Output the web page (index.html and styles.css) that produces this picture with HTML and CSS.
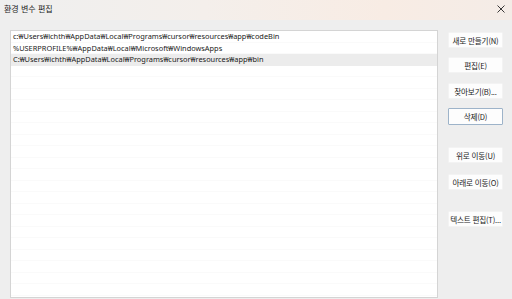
FILE: index.html
```html
<!DOCTYPE html>
<html lang="ko">
<head>
<meta charset="utf-8">
<link rel="stylesheet" href="styles.css">
</head>
<body>
<div class="window">
  <div class="titlebar">
    <span class="title">환경 변수 편집</span>
    <svg class="close" width="10" height="10" viewBox="0 0 10 10"><path d="M1.5 1.5 L8.5 8.5 M8.5 1.5 L1.5 8.5" stroke="#222" stroke-width="0.9" fill="none"/></svg>
  </div>
  <div class="content">
    <div class="list">
      <div class="row">c:₩Users₩ichth₩AppData₩Local₩Programs₩cursor₩resources₩app₩codeBin</div>
      <div class="row">%USERPROFILE%₩AppData₩Local₩Microsoft₩WindowsApps</div>
      <div class="row selected">C:₩Users₩ichth₩AppData₩Local₩Programs₩cursor₩resources₩app₩bin</div>
      <div class="row"></div><div class="row"></div><div class="row"></div><div class="row"></div>
      <div class="row"></div><div class="row"></div><div class="row"></div><div class="row"></div>
      <div class="row"></div><div class="row"></div><div class="row"></div><div class="row"></div>
      <div class="row"></div><div class="row"></div><div class="row"></div><div class="row"></div>
      <div class="row"></div><div class="row"></div><div class="row"></div><div class="row"></div>
    </div>
    <div class="buttons">
      <button class="btn">새로 만들기(N)</button>
      <button class="btn g1">편집(E)</button>
      <button class="btn g2">찾아보기(B)...</button>
      <button class="btn g1 focus">삭제(D)</button>
      <button class="btn g3">위로 이동(U)</button>
      <button class="btn g4">아래로 이동(O)</button>
      <button class="btn g5">텍스트 편집(T)...</button>
    </div>
  </div>
</div>
</body>
</html>
```
FILE: styles.css
```css
html, body {
  margin: 0;
  padding: 0;
  width: 512px;
  height: 299px;
  overflow: hidden;
  background: #eeeeee;
  font-family: "Noto Sans", "Noto Sans CJK KR", sans-serif;
}
.window {
  display: flex;
  flex-direction: column;
  height: 299px;
}
.titlebar {
  height: 20px;
  flex: none;
  display: flex;
  align-items: center;
  justify-content: space-between;
  padding: 0 6px 0 4px;
  background: linear-gradient(90deg, #efefef 0%, #f4efeb 40%, #f8ece4 75%, #f4ece7 100%);
}
.title {
  font-family: "Noto Sans CJK KR", sans-serif;
  font-size: 8px;
  color: #1a1a1a;
  margin-top: -4px;
}
.close {
  margin-top: -3px;
}
.content {
  display: flex;
  padding: 10px 0 0 10px;
  flex: 1;
  min-height: 0;
}
.list {
  width: 426px;
  height: 266px;
  background: #fff;
  border: 1px solid #d4d4d4;
  overflow: hidden;
  flex: none;
}
.row {
  height: 11.5px;
  line-height: 11px;
  box-sizing: border-box;
  border-bottom: 1px solid #fafafa;
  font-size: 7.4px;
  color: #1a1a1a;
  padding-left: 2px;
  white-space: nowrap;
}
.row.selected {
  background: #ececec;
  border-bottom-color: #ececec;
}
.buttons {
  display: flex;
  flex-direction: column;
  margin-left: 10px;
  padding-top: 2px;
  width: 55px;
}
.btn {
  height: 16px;
  width: 55px;
  padding: 0;
  margin: 0;
  background: #fdfdfd;
  border: 1px solid #f3f3f3;
  border-radius: 1px;
  font-family: "Noto Sans CJK KR", sans-serif;
  font-size: 7.6px;
  color: #1a1a1a;
  white-space: nowrap;
  letter-spacing: -0.2px;
}
.btn.focus {
  border-color: #9db3c9;
  height: 17px;
}
.g1 { margin-top: 9px; }
.g2 { margin-top: 10px; }
.g3 { margin-top: 22px; }
.g4 { margin-top: 11px; }
.g5 { margin-top: 21px; }
```
